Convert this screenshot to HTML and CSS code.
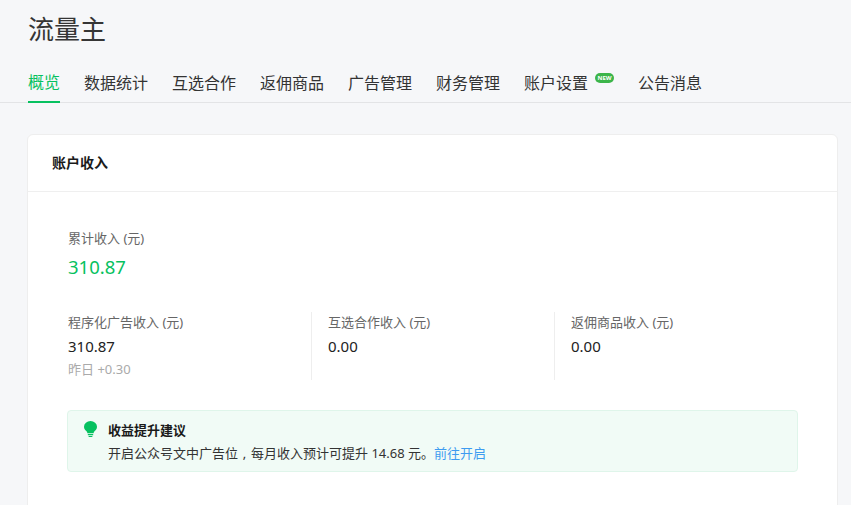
FILE: index.html
```html
<!DOCTYPE html>
<html lang="zh-CN">
<head>
  <meta charset="UTF-8">
  <title>流量主</title>
  <link rel="stylesheet" href="styles.css">
</head>
<body>
  <div class="page">
    <h1 class="title">流量主</h1>
    <nav class="tabs">
      <a class="tab active">概览</a>
      <a class="tab">数据统计</a>
      <a class="tab">互选合作</a>
      <a class="tab">返佣商品</a>
      <a class="tab">广告管理</a>
      <a class="tab">财务管理</a>
      <a class="tab">账户设置<span class="new-badge">NEW</span></a>
      <a class="tab">公告消息</a>
    </nav>
    <section class="card">
      <div class="card-head">账户收入</div>
      <div class="card-body">
        <div class="label">累计收入 (元)</div>
        <div class="total">310.87</div>
        <div class="stats">
          <div class="stat">
            <div class="label">程序化广告收入 (元)</div>
            <div class="value">310.87</div>
            <div class="yesterday">昨日 +0.30</div>
          </div>
          <div class="stat">
            <div class="label">互选合作收入 (元)</div>
            <div class="value">0.00</div>
          </div>
          <div class="stat">
            <div class="label">返佣商品收入 (元)</div>
            <div class="value">0.00</div>
          </div>
        </div>
        <div class="tip">
          <svg class="tip-icon" viewBox="0.7 0 12.6 17.7" width="13" height="16" preserveAspectRatio="none">
            <path d="M7 0a6.3 6.3 0 0 0-6.3 6.3c0 2.3 1.1 3.7 2.2 4.8.7.7 1 1.5 1.1 2.4h6c.1-.9.4-1.7 1.1-2.4 1.1-1.1 2.2-2.5 2.2-4.8A6.3 6.3 0 0 0 7 0z" fill="#07c160"/>
            <path d="M4.4 14.5h5.2v1.2H4.4zM5.2 16.5h3.6v1.2H5.2z" fill="#07c160"/>
          </svg>
          <div>
            <div class="tip-title">收益提升建议</div>
            <div class="tip-text">开启公众号文中广告位<span class="comma">,</span>每月收入预计可提升 14.68 元。<a class="link">前往开启</a></div>
          </div>
        </div>
      </div>
    </section>
  </div>
</body>
</html>
```
FILE: styles.css
```css
html, body {
  margin: 0;
  padding: 0;
  height: 505px;
  overflow: hidden;
}
body {
  font-family: "Noto Sans", "Noto Sans CJK SC", sans-serif;
  background: #f6f7f9;
  color: #1a1a1a;
}
.title {
  margin: 0;
  padding: 10px 0 0 28px;
  font-size: 26px;
  line-height: 38px;
  font-weight: 400;
  color: #353535;
}
.tabs {
  display: flex;
  gap: 24px;
  margin-top: 16px;
  padding-left: 28px;
  height: 38px;
  border-bottom: 1px solid #e3e4e6;
}
.tab {
  position: relative;
  display: block;
  box-sizing: border-box;
  height: 39px;
  font-size: 16px;
  line-height: 38px;
  color: #333;
}
.tab.active {
  color: #07c160;
  line-height: 36px;
  border-bottom: 2px solid #07c160;
}
.tab:nth-child(7) {
  margin-right: 26px;
}
.new-badge {
  position: absolute;
  top: 9px;
  right: -26px;
  width: 19px;
  height: 10px;
  border-radius: 5px;
  background: #3cb54a;
  color: #fff;
  font-size: 6px;
  line-height: 10px;
  font-weight: 700;
  text-align: center;
}
.card {
  margin: 31px 13px 0 27px;
  background: #fff;
  border: 1px solid #eeeeee;
  border-radius: 6px;
  height: 400px;
}
.card-head {
  padding: 0 24px;
  font-size: 14px;
  font-weight: 700;
  line-height: 56px;
  border-bottom: 1px solid #efefef;
}
.card-body {
  padding: 36px 39px 0 40px;
}
.label {
  font-size: 13px;
  line-height: 20px;
  color: #666;
}
.total {
  margin-top: 6px;
  font-size: 18.5px;
  line-height: 26px;
  color: #07c160;
}
.stats {
  display: flex;
  margin-top: 32px;
}
.stat {
  width: 226px;
  height: 68px;
  padding-left: 16px;
  border-left: 1px solid #eeeeee;
}
.stat:first-child {
  width: 243px;
  padding-left: 0;
  border-left: 0;
}
.value {
  margin-top: 2px;
  font-size: 15px;
  line-height: 24px;
  color: #222;
}
.yesterday {
  font-size: 13px;
  line-height: 22px;
  color: #aaa;
}
.tip {
  display: flex;
  gap: 11px;
  margin: 30px 0 0 -1px;
  padding: 9px 16px;
  height: 42px;
  background: #f1fbf6;
  border: 1px solid #dff5ea;
  border-radius: 4px;
}
.tip-icon {
  flex: none;
  margin-top: 1px;
}
.tip-title {
  font-size: 13px;
  font-weight: 700;
  line-height: 20px;
}
.tip-text {
  margin-top: 3px;
  font-size: 13px;
  line-height: 20px;
  color: #333;
}
.comma {
  display: inline-block;
  width: 13px;
  text-align: center;
}
.link {
  color: #3e9bf0;
}
```
